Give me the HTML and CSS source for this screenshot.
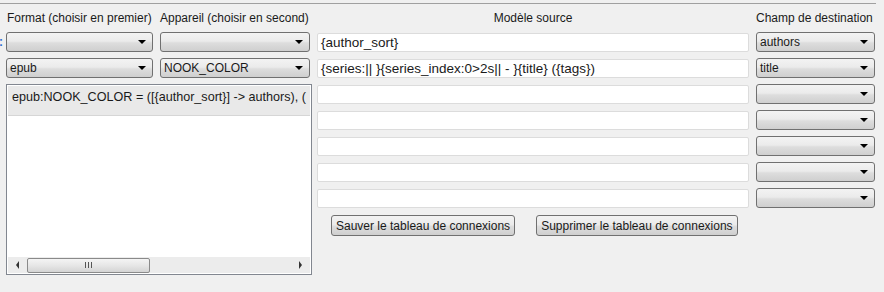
FILE: index.html
```html
<!DOCTYPE html>
<html>
    <head>
        <title>Tableau de connexions</title>
        <link rel="stylesheet" href="styles.css">
    </head>
    <body>
        <div class="topline"></div>
        <div class="board">
            <div class="edge">:</div>

            <div class="left">
                <div class="head first">Format (choisir en premier)</div>
                <div class="head">Appareil (choisir en second)</div>
                <div class="combo"><span></span><i class="arrow"></i></div>
                <div class="combo"><span></span><i class="arrow"></i></div>
                <div class="combo"><span>epub</span><i class="arrow"></i></div>
                <div class="combo"><span>NOOK_COLOR</span><i class="arrow"></i></div>

                <div class="listbox">
                    <div class="item">epub:NOOK_COLOR = ([{author_sort}] -&gt; authors), (</div>
                    <div class="listspace"></div>
                    <div class="hscroll">
                        <i class="sarrow left"></i>
                        <div class="thumb"><span class="grip"></span></div>
                        <div class="track"></div>
                        <i class="sarrow right"></i>
                    </div>
                </div>
            </div>

            <div class="right">
                <div class="head center">Modèle source</div>
                <div class="head">Champ de destination</div>

                <div class="field">{author_sort}</div>
                <div class="combo"><span>authors</span><i class="arrow"></i></div>
                <div class="field">{series:|| }{series_index:0&gt;2s|| - }{title} ({tags})</div>
                <div class="combo"><span>title</span><i class="arrow"></i></div>
                <div class="field"></div>
                <div class="combo"><span></span><i class="arrow"></i></div>
                <div class="field"></div>
                <div class="combo"><span></span><i class="arrow"></i></div>
                <div class="field"></div>
                <div class="combo"><span></span><i class="arrow"></i></div>
                <div class="field"></div>
                <div class="combo"><span></span><i class="arrow"></i></div>
                <div class="field"></div>
                <div class="combo"><span></span><i class="arrow"></i></div>

                <div class="actions">
                    <button class="btn">Sauver le tableau de connexions</button>
                    <button class="btn">Supprimer le tableau de connexions</button>
                </div>
            </div>
        </div>
    </body>
</html>
```

FILE: styles.css
```css
body {
  margin: 0;
  padding: 0;
  background: #f0f0f0;
  font-family: 'Liberation Sans', Arial, sans-serif;
  font-size: 12px;
  color: #1a1a1a;
  width: 884px;
  height: 292px;
  overflow: hidden;
}

.topline {
  margin-top: 3px;
  width: 876px;
  border-top: 1px solid #a0a0a0;
}

.board {
  display: flex;
  gap: 7px;
  padding-top: 2px;
}

.edge {
  width: 0;
  margin-top: 26px;
  color: #2f6fd0;
  line-height: 20px;
  font-weight: bold;
  margin-left: -1px;
}

.left {
  display: grid;
  grid-template-columns: 147px 150px;
  grid-template-rows: 20px 20px 20px 191px;
  gap: 6px 7px;
}

.right {
  display: grid;
  grid-template-columns: 432px 119px;
  grid-template-rows: repeat(9, 20px);
  gap: 6px 7px;
}

.head {
  align-self: end;
  line-height: 16px;
  white-space: nowrap;
}

.head.first {
  margin-left: 1px;
}

.center {
  text-align: center;
}

.combo {
  height: 20px;
  box-sizing: border-box;
  border: 1px solid #707070;
  border-radius: 3px;
  background: linear-gradient(#f3f3f3 0%, #ebebeb 45%, #dddddd 55%, #cfcfcf 100%);
  display: flex;
  align-items: center;
  padding: 0 6px 0 3px;
  white-space: nowrap;
}

.combo span {
  flex: 1;
  line-height: 16px;
}

.arrow {
  width: 0;
  height: 0;
  border-left: 4px solid transparent;
  border-right: 4px solid transparent;
  border-top: 4px solid #000;
}

.field {
  height: 19px;
  margin-top: 1px;
  box-sizing: border-box;
  background: #fff;
  border: 1px solid #dcdcdc;
  border-radius: 2px;
  padding: 0 3px;
  font-size: 13.5px;
  line-height: 17px;
  white-space: nowrap;
  overflow: hidden;
}

.listbox {
  grid-column: 1 / 3;
  width: 306px;
  height: 191px;
  box-sizing: border-box;
  border: 1px solid #828790;
  background: #fff;
  display: flex;
  flex-direction: column;
  overflow: hidden;
}

.item {
  height: 30px;
  box-sizing: border-box;
  margin: 1px 1px 0 1px;
  padding: 3px 4px 0 4px;
  background: #e9e9e9;
  border-bottom: 1px solid #d6d6d6;
  font-size: 12.6px;
  white-space: nowrap;
  overflow: hidden;
  line-height: 16px;
}

.listspace {
  flex: 1;
}

.hscroll {
  height: 16px;
  margin: 0 1px 1px 1px;
  background: #ececec;
  display: flex;
  align-items: center;
}

.sarrow {
  width: 0;
  height: 0;
  border-top: 4px solid transparent;
  border-bottom: 4px solid transparent;
  margin: 0 8px;
}

.sarrow.left {
  border-right: 3px solid #333;
}

.sarrow.right {
  border-left: 3px solid #333;
}

.thumb {
  width: 123px;
  height: 15px;
  box-sizing: border-box;
  border: 1px solid #8a8a8a;
  border-radius: 2px;
  background: linear-gradient(#f4f4f4 0%, #e6e6e6 50%, #d4d4d4 100%);
  display: flex;
  align-items: center;
  justify-content: center;
}

.grip {
  width: 7px;
  height: 6px;
  background: repeating-linear-gradient(90deg, #555 0 1px, transparent 1px 3px);
}

.track {
  flex: 1;
}

.actions {
  grid-column: 1;
  display: flex;
  gap: 21px;
  padding-left: 14px;
}

.btn {
  height: 21px;
  margin-top: 1px;
  padding: 0 4px;
  border: 1px solid #707070;
  border-radius: 3px;
  background: linear-gradient(#f2f2f2 0%, #ebebeb 45%, #dddddd 55%, #cfcfcf 100%);
  font-family: 'Liberation Sans', Arial, sans-serif;
  font-size: 12px;
  color: #1a1a1a;
  white-space: nowrap;
}
```
